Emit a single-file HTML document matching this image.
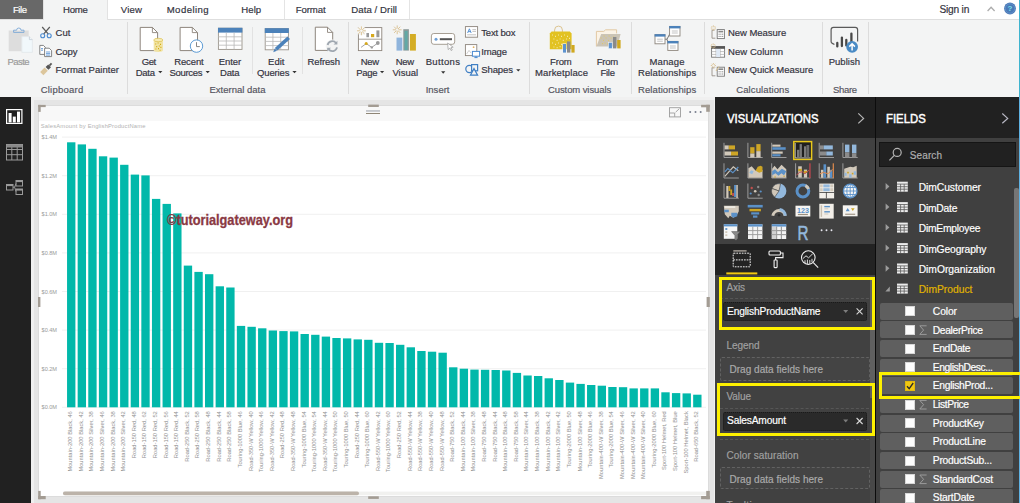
<!DOCTYPE html>
<html><head><meta charset="utf-8"><title>Power BI Desktop</title>
<style>
html,body{margin:0;padding:0}
body{width:1020px;height:503px;overflow:hidden;position:relative;background:#ffffff;font-family:"Liberation Sans",sans-serif;}
div,span,svg{position:absolute;box-sizing:border-box}
.t{white-space:nowrap;display:block;-webkit-text-stroke:0.18px currentColor}
#tabs{left:0;top:0;width:1020px;height:19px;background:#ffffff}
#filetab{left:0;top:0;width:43px;height:19px;background:#686868}
#hometab{left:43.4px;top:0;width:64.2px;height:20px;background:#f3f4f4;border-left:1px solid #e2e2e2;border-right:1px solid #e2e2e2}
#ribbon{left:0;top:19px;width:1020px;height:78px;background:#f3f4f4;border-top:1px solid #dedede}
.vsep{width:1px;background:#dcdcdc}
#sidebar{left:0;top:97.3px;width:31.6px;height:406px;background:#212121}
#canvasbg{left:31px;top:97px;width:684.2px;height:406px;background:#f0f0f0}
#canvasin{left:34px;top:100.4px;width:680px;height:402.6px;background:#e5e5e5}
#visual{left:38px;top:105px;width:671px;height:392.2px;background:#ffffff;border:1px solid #dcdcdc}
#vhead{left:39px;top:106px;width:669px;height:15px;background:#f8f8f8}
#vizpane{left:715.2px;top:97px;width:159.4px;height:406px;background:#414141}
#vizhead{left:715.2px;top:97px;width:159.4px;height:41px;background:#212121}
#viztabs{left:715.2px;top:244px;width:159.4px;height:31px;background:#232323}
#gap{left:874.5px;top:97px;width:1.9px;height:406px;background:#0c0c0c}
#fieldspane{left:876.4px;top:97px;width:143.6px;height:406px;background:#404040}
#fieldshead{left:876.4px;top:97px;width:143.6px;height:41px;background:#212121}
.chip{background:#2a2a2a;border:1px dotted #1a1a1a;border-radius:2px}
.drop{border:1px dashed #626262;border-radius:2px;background:#444444}
.hl{border:3px solid #fdf000}
.frow{left:880px;width:133px;height:16px;background:#5f5f5f;border-radius:2px}
.cb{left:905px;width:10px;height:10px;background:#fdfdfd;border:1px solid #d8d8d8}
.bl{position:static;display:inline-block;width:0;height:0}
</style></head>
<body>
<div id="tabs"></div>
<div id="ribbon"></div>
<div id="filetab"></div>
<div id="hometab"></div>
<div class="vsep" style="left:284px;top:0;height:19px;background:#e4e4e4"></div>
<div class="vsep" style="left:409px;top:0;height:19px;background:#e4e4e4"></div>
<div class="vsep" style="left:126.5px;top:22px;height:72px"></div>
<div class="vsep" style="left:348.0px;top:22px;height:72px"></div>
<div class="vsep" style="left:529.0px;top:22px;height:72px"></div>
<div class="vsep" style="left:631.2px;top:22px;height:72px"></div>
<div class="vsep" style="left:704.0px;top:22px;height:72px"></div>
<div class="vsep" style="left:821.6px;top:22px;height:72px"></div>
<div class="vsep" style="left:867.8px;top:22px;height:72px"></div>
<div class="vsep" style="left:251.5px;top:27px;height:47px;background:#e2e2e2"></div>
<div class="vsep" style="left:302.3px;top:27px;height:47px;background:#e2e2e2"></div>
<svg style="left:0;top:0" width="1020" height="97" viewBox="0 0 1020 97">
<rect x="8.7" y="30.5" width="20" height="20.7" fill="#dddddd"/>
<path d="M13.6 32.4V30.2H16.6A2.2 2.2 0 0 1 21 30.2H24V32.4Z" fill="none" stroke="#7aa7d6" stroke-width="0.9"/>
<path d="M21.8 36.6H29.4L32.4 39.6V52.4H21.8Z" fill="#f1f8fb" stroke="#e3e7ea" stroke-width="0.8"/><path d="M29.4 36.6V39.6H32.4" fill="none" stroke="#c4cdd6" stroke-width="0.8"/>
<g fill="none" stroke="#5a5a5a" stroke-width="1.2"><path d="M42.2 27L48.4 34.2M49.8 27L43.6 34.2"/></g><g fill="none" stroke="#4b8ad0" stroke-width="1.1"><circle cx="42.7" cy="35.8" r="2"/><circle cx="49.2" cy="35.8" r="2"/></g>
<g fill="#fff" stroke="#767676" stroke-width="0.9"><path d="M39.8 45.4H43.4L45.4 47.4V54.4H39.8Z"/><path d="M44.6 48.2H49.2L51.6 50.6V56.6H44.6Z"/></g><path d="M46 52H50.2M46 53.6H50.2M46 55.1H50.2M41 48.6H43M41 50.2H43" stroke="#4b8ad0" stroke-width="0.8" fill="none"/>
<path d="M40.2 72L44.6 67.6L47.8 70.8L43.4 75.2Z" fill="#dcc69c"/><path d="M45.6 67L48.2 64.4L51 67.2L48.4 69.8Z" fill="#555"/><path d="M49.4 65.6L51.6 63.4" stroke="#555" stroke-width="1.8"/>
<path d="M140.2 27.4H152.4L157.6 32.6V50.6H140.2Z" fill="#ffffff" stroke="#8d857c" stroke-width="1"/><path d="M152.4 27.4V32.6H157.6" fill="none" stroke="#8d857c" stroke-width="0.9"/>
<path d="M153.7 40V50.2A4.6 1.7 0 0 0 162.9 50.2V40Z" fill="#f1e3a3"/><ellipse cx="158.3" cy="40" rx="4.6" ry="1.7" fill="#f6ebb5" stroke="#d9b93a" stroke-width="0.6"/><path d="M155.2 44h1M157.6 43h1M160 44.4h1M156.2 46.6h1M158.8 46h1M155.4 49h1M158 48.6h1M160.4 47.4h1M159.6 50.2h1" stroke="#d2ab10" stroke-width="1.1"/>
<path d="M180.1 27.4H192.3L197.5 32.6V50.6H180.1Z" fill="#ffffff" stroke="#8d857c" stroke-width="1"/><path d="M192.3 27.4V32.6H197.5" fill="none" stroke="#8d857c" stroke-width="0.9"/>
<circle cx="196.5" cy="46.1" r="6.2" fill="#fff" stroke="#5b9bd5" stroke-width="1"/><path d="M196.5 42.2V46.6H199.8" fill="none" stroke="#777" stroke-width="0.9"/>
<rect x="218.4" y="28.2" width="23.6" height="21.2" fill="#fff" stroke="#9b948b" stroke-width="0.9"/><rect x="218.0" y="27.8" width="24.4" height="4.8" fill="#4c82ba"/><path d="M218.4 36.8H242.0" stroke="#b9b9b9" stroke-width="0.8"/><path d="M218.4 41.0H242.0" stroke="#b9b9b9" stroke-width="0.8"/><path d="M218.4 45.2H242.0" stroke="#b9b9b9" stroke-width="0.8"/><path d="M226.3 32.6V49.4" stroke="#b9b9b9" stroke-width="0.8"/><path d="M234.1 32.6V49.4" stroke="#b9b9b9" stroke-width="0.8"/>
<rect x="265.2" y="28.6" width="23.2" height="21.2" fill="#fff" stroke="#9b948b" stroke-width="0.9"/><rect x="264.8" y="28.2" width="24.0" height="4.8" fill="#4c82ba"/><path d="M265.2 37.2H288.4" stroke="#b9b9b9" stroke-width="0.8"/><path d="M265.2 41.4H288.4" stroke="#b9b9b9" stroke-width="0.8"/><path d="M265.2 45.6H288.4" stroke="#b9b9b9" stroke-width="0.8"/><path d="M272.9 33.0V49.8" stroke="#b9b9b9" stroke-width="0.8"/><path d="M280.7 33.0V49.8" stroke="#b9b9b9" stroke-width="0.8"/>
<path d="M287.4 36.4L290 39L277.4 50.6L274.8 48Z" fill="#4c82ba"/><path d="M274.6 48.4L277 50.8L273.2 52.2Z" fill="#4c82ba"/>
<path d="M315.3 27.2H327.5L332.7 32.4V50.4H315.3Z" fill="#ffffff" stroke="#8d857c" stroke-width="1"/><path d="M327.5 27.2V32.4H332.7" fill="none" stroke="#8d857c" stroke-width="0.9"/>
<circle cx="332.3" cy="46.2" r="6.6" fill="#f3f4f4"/><g fill="none" stroke="#9fa7b0" stroke-width="1.8"><path d="M327.6 45A4.8 4.8 0 0 1 336 43"/><path d="M337 47.4A4.8 4.8 0 0 1 328.6 49.4"/></g><path d="M337.4 40.8V44.6H333.6Z" fill="#9fa7b0"/><path d="M327.2 51.6V47.8H331Z" fill="#9fa7b0"/>
<rect x="358.4" y="27.6" width="23.4" height="23" fill="#fff" stroke="#8d857c" stroke-width="0.9"/><path d="M358.4 39.2H381.8" stroke="#8d857c" stroke-width="0.8"/>
<rect x="366.4" y="33" width="2.6" height="4.2" fill="#9a9a9a"/><rect x="371" y="34" width="3.2" height="3.2" fill="#d6a81c"/><rect x="376.4" y="30.4" width="3" height="6.8" fill="#9a9a9a"/>
<path d="M361 47.4L366.2 43.6L371.8 47.4L377.8 43" fill="none" stroke="#9a9a9a" stroke-width="0.9"/><circle cx="366.2" cy="43.6" r="1.5" fill="#d6a81c"/><circle cx="371.8" cy="47.4" r="1.2" fill="#9a9a9a"/><circle cx="377.8" cy="43" r="1.9" fill="#9a9a9a"/>
<circle cx="361.4" cy="30.8" r="4.6" fill="#f7f7f5"/><path d="M362.6 30.8L365.8 30.8M362.2 31.6L364.5 33.9M361.4 32.0L361.4 35.2M360.6 31.6L358.3 33.9M360.2 30.8L357.0 30.8M360.6 30.0L358.3 27.7M361.4 29.6L361.4 26.4M362.2 30.0L364.5 27.7" stroke="#d9c08e" stroke-width="0.9" fill="none"/>
<rect x="396.5" y="37.6" width="5.8" height="13" fill="#8fb4dc"/><rect x="403.3" y="29.2" width="5.6" height="21.4" fill="#8c9a9a"/><rect x="404.6" y="31" width="3" height="19" fill="#3fb7b0" opacity="0.55"/><rect x="409.9" y="34" width="6" height="16.6" fill="#d4ad25"/>
<path d="M398.4 29.8L401.6 29.8M398.0 30.6L400.3 32.9M397.2 31.0L397.2 34.2M396.4 30.6L394.1 32.9M396.0 29.8L392.8 29.8M396.4 29.0L394.1 26.7M397.2 28.6L397.2 25.4M398.0 29.0L400.3 26.7" stroke="#d9c08e" stroke-width="0.9" fill="none"/>
<rect x="431.4" y="33.5" width="23.3" height="10.8" rx="2.4" fill="#fff" stroke="#a79f94" stroke-width="1"/><circle cx="436" cy="39.2" r="1.5" fill="#6fa0d6"/><rect x="439.8" y="38.2" width="12.2" height="2" fill="#555"/>
<path d="M447.6 43L448.2 49.6L449.9 48L451.2 50.6L452.3 50L451 47.5L453.2 47.2Z" fill="#fff" stroke="#999" stroke-width="0.7"/>
<path d="M441.1 71.3H445.3L443.2 73.7Z" fill="#333"/>
<rect x="465.4" y="26.6" width="12.2" height="10.6" fill="#fff" stroke="#8d857c" stroke-width="0.9"/><path d="M467.6 33L469.4 28.8L471.2 33M468.2 31.6H470.6" fill="none" stroke="#4b8ad0" stroke-width="0.9"/><path d="M472.4 29.6H476M472.4 31.4H476M467.2 34.8H476" stroke="#aaa" stroke-width="0.7"/>
<rect x="465.4" y="44.6" width="11.4" height="11" fill="#fff" stroke="#8d857c" stroke-width="0.9"/><circle cx="473.6" cy="47.2" r="0.9" fill="#e0b060"/><path d="M466.6 54L469 50.4L471 53" fill="none" stroke="#bbb" stroke-width="0.7"/><rect x="472.4" y="51.4" width="7.2" height="4.8" fill="#fff" stroke="#4b8ad0" stroke-width="1"/><path d="M474.4 57.6H477.6M476 56.2V57.6" stroke="#4b8ad0" stroke-width="1"/>
<g fill="none" stroke="#3f7fc4" stroke-width="1.2"><circle cx="469.4" cy="69" r="3.6"/><rect x="471.6" y="64.6" width="6" height="6.2" fill="#f3f4f4"/><path d="M470.4 75.2L474 68.6L477.6 75.2Z" fill="#f3f4f4"/></g>
<path d="M158.2 70.9H162.4L160.3 73.3Z" fill="#333"/>
<path d="M205.6 70.9H209.8L207.7 73.3Z" fill="#333"/>
<path d="M292.4 70.9H296.6L294.5 73.3Z" fill="#333"/>
<path d="M380.0 70.9H384.2L382.1 73.3Z" fill="#333"/>
<path d="M516.2 69.2H520.4L518.3 71.6Z" fill="#333"/>
<path d="M554.6 32.2V30A3.9 3.9 0 0 1 562.4 30V32.2" fill="none" stroke="#dcc490" stroke-width="1"/>
<path d="M549.8 33.6L551.6 31.6H569.8L571.6 33.6V49.2H549.8Z" fill="#e2c222"/><path d="M552 35h1M555 36.4h1M558 35h1M561 36.4h1M564 35h1M567 36.4h1M553.4 39h1M556.6 40.4h1M559.6 39h1M562.8 40.4h1M566 39h1M552 43h1M555 44.4h1M558 43h1M561 44.4h1M553.4 47h1M556.6 47.6h1M559.6 46.6h1M569 38.4h1M568.6 42h1" stroke="#f3e7a6" stroke-width="1.1"/>
<rect x="562.4" y="43.4" width="4" height="9.6" fill="#f3f4f4"/><rect x="563" y="44" width="3" height="8.6" fill="#5d93cf"/><rect x="567" y="41.4" width="3.4" height="11.2" fill="#8a8a8a"/><rect x="571.4" y="45" width="3.2" height="7.6" fill="#d0a81f"/>
<path d="M596.4 46.4V31.4H603.8L605.6 29.8H616.6V33.4" fill="#fbf3e6" stroke="#e2c9a4" stroke-width="1"/><path d="M596.4 46.4L601.2 34H620.6L617.4 46.4Z" fill="#cbc4b6"/><path d="M600.6 38h1M603 40.4h1M605.6 38h1M608 40.4h1M610.6 38h1M602 43.6h1M604.6 43h1M607 44h1M603.6 36h1M608.6 36h1M613 37h1" stroke="#e2c866" stroke-width="1"/>
<rect x="608.6" y="42.6" width="3.6" height="6" fill="#5d93cf" stroke="#f3f4f4" stroke-width="0.5"/><rect x="613" y="37" width="3.4" height="11.4" fill="#8a8a8a"/><rect x="617.2" y="40" width="3.4" height="8.4" fill="#d0a81f"/>
<path d="M665 39.2H667L670.2 33M667 39.2L668.6 44.8" fill="none" stroke="#777" stroke-width="1"/>
<rect x="655.0" y="34.6" width="10.0" height="9.2" fill="#fff" stroke="#8d857c" stroke-width="0.9"/><rect x="654.6" y="34.2" width="10.8" height="2.4" fill="#4c82ba"/><path d="M657.2 39.2H662.8M657.2 41.2H662.8" stroke="#aaa" stroke-width="0.7"/>
<rect x="669.6" y="26.4" width="10.4" height="9.6" fill="#fff" stroke="#8d857c" stroke-width="0.9"/><rect x="669.2" y="26.0" width="11.2" height="2.4" fill="#4c82ba"/><path d="M671.8 31.0H677.8M671.8 33.0H677.8" stroke="#aaa" stroke-width="0.7"/>
<rect x="667.8" y="41.4" width="10.2" height="9.0" fill="#fff" stroke="#8d857c" stroke-width="0.9"/><rect x="667.4" y="41.0" width="11.0" height="2.4" fill="#4c82ba"/><path d="M670.0 46.0H675.8M670.0 48.0H675.8" stroke="#aaa" stroke-width="0.7"/>
<path d="M714.6 30.2H712V38.2H715.4" fill="none" stroke="#8d857c" stroke-width="0.8"/><rect x="717.2" y="29.6" width="7.2" height="9" fill="#fff" stroke="#777" stroke-width="0.9"/><rect x="718.4" y="30.8" width="4.8" height="1.6" fill="#888"/><path d="M718.6 34.2h1M720.4 34.2h1M722.2 34.2h1M718.6 36.4h1M720.4 36.4h1M722.2 36.4h1" stroke="#777" stroke-width="1"/><path d="M714.6 28.0L716.0 28.0M714.2 28.8L715.2 29.8M713.4 29.2L713.4 30.6M712.6 28.8L711.6 29.8M712.2 28.0L710.8 28.0M712.6 27.2L711.6 26.2M713.4 26.8L713.4 25.4M714.2 27.2L715.2 26.2" stroke="#d9c08e" stroke-width="0.9" fill="none"/>
<rect x="711.6" y="46.6" width="13" height="10.6" fill="#fff" stroke="#777" stroke-width="0.9"/><rect x="711.2" y="46.2" width="13.8" height="2.6" fill="#555"/><path d="M711.6 51.6H724.6M711.6 54.4H724.6M716 48.8V57.2M720.2 48.8V57.2" stroke="#aaa" stroke-width="0.7"/><rect x="716.2" y="49" width="3.8" height="8" fill="#dfe9f5"/><path d="M714.4 46.0L715.8 46.0M714.0 46.8L715.0 47.8M713.2 47.2L713.2 48.6M712.4 46.8L711.4 47.8M712.0 46.0L710.6 46.0M712.4 45.2L711.4 44.2M713.2 44.8L713.2 43.4M714.0 45.2L715.0 44.2" stroke="#d9c08e" stroke-width="0.9" fill="none"/>
<path d="M714.6 67.8H712V75.8H715.4" fill="none" stroke="#8d857c" stroke-width="0.8"/><rect x="717.2" y="67.2" width="7.2" height="9" fill="#fff" stroke="#777" stroke-width="0.9"/><rect x="718.4" y="68.4" width="4.8" height="1.6" fill="#888"/><path d="M718.6 71.8h1M720.4 71.8h1M722.2 71.8h1M718.6 74.0h1M720.4 74.0h1M722.2 74.0h1" stroke="#777" stroke-width="1"/><path d="M714.6 65.6L716.0 65.6M714.2 66.4L715.2 67.4M713.4 66.8L713.4 68.2M712.6 66.4L711.6 67.4M712.2 65.6L710.8 65.6M712.6 64.8L711.6 63.8M713.4 64.4L713.4 63.0M714.2 64.8L715.2 63.8" stroke="#d9c08e" stroke-width="0.9" fill="none"/><path d="M716 71L719 66.4" stroke="#d9c08e" stroke-width="1"/>
<path d="M834.4 44.6L832.4 43.4A2.2 2.2 0 0 1 831.1 41.4V29.8A2.4 2.4 0 0 1 833.5 27.4H855.2A2.4 2.4 0 0 1 857.6 29.8V41.6" fill="none" stroke="#5a5a5a" stroke-width="1.2"/>
<g stroke="#484848" stroke-width="2.3" stroke-linecap="round"><path d="M837.3 43V46.4M841.9 37.6V46M846.3 40V45.4M851.4 33.6V42"/></g>
<circle cx="852.1" cy="46.8" r="5.9" fill="#4a8bc5"/><path d="M852.1 50.6V44.2M849.3 46.6L852.1 43.8L854.9 46.6" fill="none" stroke="#fff" stroke-width="1.5"/>
<path d="M987.6 11L991.1 7.2L994.6 11" fill="none" stroke="#adadad" stroke-width="1.3"/>
<circle cx="1010" cy="8.5" r="5.9" fill="#4a7ab8"/><circle cx="1010" cy="8.5" r="4.7" fill="none" stroke="#6f9ad0" stroke-width="0.6"/><text x="1010" y="11.4" font-family="Liberation Sans, sans-serif" font-size="8" font-weight="bold" fill="#7fe0e8" text-anchor="middle">?</text>
</svg>
<div style="left:1018.8px;top:0;width:1.2px;height:97px;background:#3fb4cf"></div>
<div id="sidebar"></div>
<div id="canvasbg"></div>
<div id="canvasin"></div>
<div id="visual"></div>
<div id="vhead"></div>
<svg id="chart" style="left:0;top:97px" width="716" height="406" viewBox="0 97 716 406">
<g fill="none" stroke="#ffffff" stroke-width="1.2"><rect x="6.6" y="109.6" width="15.3" height="13.8"/></g>
<g fill="#ffffff"><rect x="8.6" y="113" width="3" height="9.4"/><rect x="12.8" y="116.6" width="3" height="5.8"/><rect x="17" y="111.6" width="3" height="10.8"/></g>
<g fill="none" stroke="#9a9a9a" stroke-width="1"><rect x="6.5" y="144.5" width="16" height="15.5"/><path d="M6.5 149.5h16M6.5 154.7h16M11.8 147v13M17.2 147v13"/></g><rect x="6.5" y="144.5" width="16" height="3" fill="#8a8a8a"/>
<g fill="none" stroke="#9a9a9a" stroke-width="1"><rect x="6.5" y="184.5" width="6.5" height="5.5"/><rect x="16" y="180.5" width="6.5" height="5.5"/><rect x="16" y="189" width="6.5" height="5.5"/><path d="M13 187.2h1.6M14.6 187.2L16 183.5M14.6 187.2L16 191.6"/></g>
<rect x="6.5" y="184.5" width="6.5" height="1.6" fill="#9a9a9a"/><rect x="16" y="180.5" width="6.5" height="1.6" fill="#9a9a9a"/><rect x="16" y="189" width="6.5" height="1.6" fill="#9a9a9a"/>
<rect x="62" y="406.80" width="644" height="1" fill="#f0f0f0"/>
<rect x="62" y="368.20" width="644" height="1" fill="#f0f0f0"/>
<rect x="62" y="329.60" width="644" height="1" fill="#f0f0f0"/>
<rect x="62" y="291.00" width="644" height="1" fill="#f0f0f0"/>
<rect x="62" y="252.40" width="644" height="1" fill="#f0f0f0"/>
<rect x="62" y="213.80" width="644" height="1" fill="#f0f0f0"/>
<rect x="62" y="175.20" width="644" height="1" fill="#f0f0f0"/>
<rect x="62" y="136.60" width="644" height="1" fill="#f0f0f0"/>
<g fill="#01b8aa">
<rect x="67.05" y="142.30" width="8.35" height="265.00"/>
<rect x="77.66" y="144.40" width="8.35" height="262.90"/>
<rect x="88.27" y="148.80" width="8.35" height="258.50"/>
<rect x="98.89" y="156.30" width="8.35" height="251.00"/>
<rect x="109.50" y="157.60" width="8.35" height="249.70"/>
<rect x="120.11" y="164.80" width="8.35" height="242.50"/>
<rect x="130.72" y="174.60" width="8.35" height="232.70"/>
<rect x="141.33" y="175.40" width="8.35" height="231.90"/>
<rect x="151.95" y="198.90" width="8.35" height="208.40"/>
<rect x="162.56" y="203.90" width="8.35" height="203.40"/>
<rect x="173.17" y="213.40" width="8.35" height="193.90"/>
<rect x="183.78" y="265.60" width="8.35" height="141.70"/>
<rect x="194.39" y="271.90" width="8.35" height="135.40"/>
<rect x="205.01" y="274.20" width="8.35" height="133.10"/>
<rect x="215.62" y="286.30" width="8.35" height="121.00"/>
<rect x="226.23" y="287.50" width="8.35" height="119.80"/>
<rect x="236.84" y="325.90" width="8.35" height="81.40"/>
<rect x="247.45" y="326.80" width="8.35" height="80.50"/>
<rect x="258.07" y="328.30" width="8.35" height="79.00"/>
<rect x="268.68" y="330.50" width="8.35" height="76.80"/>
<rect x="279.29" y="331.10" width="8.35" height="76.20"/>
<rect x="289.90" y="331.40" width="8.35" height="75.90"/>
<rect x="300.51" y="334.00" width="8.35" height="73.30"/>
<rect x="311.13" y="334.80" width="8.35" height="72.50"/>
<rect x="321.74" y="336.60" width="8.35" height="70.70"/>
<rect x="332.35" y="338.00" width="8.35" height="69.30"/>
<rect x="342.96" y="338.40" width="8.35" height="68.90"/>
<rect x="353.57" y="339.40" width="8.35" height="67.90"/>
<rect x="364.19" y="339.80" width="8.35" height="67.50"/>
<rect x="374.80" y="342.80" width="8.35" height="64.50"/>
<rect x="385.41" y="343.00" width="8.35" height="64.30"/>
<rect x="396.02" y="344.80" width="8.35" height="62.50"/>
<rect x="406.63" y="347.30" width="8.35" height="60.00"/>
<rect x="417.25" y="351.00" width="8.35" height="56.30"/>
<rect x="427.86" y="351.70" width="8.35" height="55.60"/>
<rect x="438.47" y="352.70" width="8.35" height="54.60"/>
<rect x="449.08" y="367.30" width="8.35" height="40.00"/>
<rect x="459.69" y="368.70" width="8.35" height="38.60"/>
<rect x="470.31" y="369.60" width="8.35" height="37.70"/>
<rect x="480.92" y="369.80" width="8.35" height="37.50"/>
<rect x="491.53" y="370.00" width="8.35" height="37.30"/>
<rect x="502.14" y="370.50" width="8.35" height="36.80"/>
<rect x="512.75" y="372.90" width="8.35" height="34.40"/>
<rect x="523.37" y="375.50" width="8.35" height="31.80"/>
<rect x="533.98" y="376.00" width="8.35" height="31.30"/>
<rect x="544.59" y="378.30" width="8.35" height="29.00"/>
<rect x="555.20" y="380.00" width="8.35" height="27.30"/>
<rect x="565.81" y="382.60" width="8.35" height="24.70"/>
<rect x="576.43" y="383.90" width="8.35" height="23.40"/>
<rect x="587.04" y="385.00" width="8.35" height="22.30"/>
<rect x="597.65" y="385.70" width="8.35" height="21.60"/>
<rect x="608.26" y="387.00" width="8.35" height="20.30"/>
<rect x="618.87" y="387.20" width="8.35" height="20.10"/>
<rect x="629.49" y="388.40" width="8.35" height="18.90"/>
<rect x="640.10" y="388.40" width="8.35" height="18.90"/>
<rect x="650.71" y="388.40" width="8.35" height="18.90"/>
<rect x="661.32" y="392.30" width="8.35" height="15.00"/>
<rect x="671.93" y="393.10" width="8.35" height="14.20"/>
<rect x="682.55" y="393.40" width="8.35" height="13.90"/>
<rect x="693.16" y="394.70" width="8.35" height="12.60"/>
</g>
<g font-family="Liberation Sans, sans-serif" font-size="5.75" fill="#8f8f8f" text-anchor="end">
<text transform="translate(72.12,411.2) rotate(-90)">Mountain-200 Black, 46</text>
<text transform="translate(82.74,411.2) rotate(-90)">Mountain-200 Black, 42</text>
<text transform="translate(93.35,411.2) rotate(-90)">Mountain-200 Silver, 38</text>
<text transform="translate(103.96,411.2) rotate(-90)">Mountain-200 Silver, 46</text>
<text transform="translate(114.57,411.2) rotate(-90)">Mountain-200 Black, 38</text>
<text transform="translate(125.19,411.2) rotate(-90)">Mountain-200 Silver, 42</text>
<text transform="translate(135.80,411.2) rotate(-90)">Road-150 Red, 48</text>
<text transform="translate(146.41,411.2) rotate(-90)">Road-150 Red, 62</text>
<text transform="translate(157.02,411.2) rotate(-90)">Road-150 Red, 52</text>
<text transform="translate(167.63,411.2) rotate(-90)">Road-150 Red, 56</text>
<text transform="translate(178.25,411.2) rotate(-90)">Road-150 Red, 44</text>
<text transform="translate(188.86,411.2) rotate(-90)">Road-250 Black, 52</text>
<text transform="translate(199.47,411.2) rotate(-90)">Road-250 Red, 58</text>
<text transform="translate(210.08,411.2) rotate(-90)">Road-250 Black, 48</text>
<text transform="translate(220.69,411.2) rotate(-90)">Road-250 Black, 44</text>
<text transform="translate(231.31,411.2) rotate(-90)">Road-250 Black, 58</text>
<text transform="translate(241.92,411.2) rotate(-90)">Touring-1000 Blue, 46</text>
<text transform="translate(252.53,411.2) rotate(-90)">Road-350-W Yellow, 40</text>
<text transform="translate(263.14,411.2) rotate(-90)">Touring-1000 Yellow, 46</text>
<text transform="translate(273.75,411.2) rotate(-90)">Road-350-W Yellow, 42</text>
<text transform="translate(284.37,411.2) rotate(-90)">Road-250 Red, 48</text>
<text transform="translate(294.98,411.2) rotate(-90)">Road-350-W Yellow, 48</text>
<text transform="translate(305.59,411.2) rotate(-90)">Touring-1000 Blue, 54</text>
<text transform="translate(316.20,411.2) rotate(-90)">Touring-1000 Yellow, 54</text>
<text transform="translate(326.81,411.2) rotate(-90)">Road-350-W Yellow, 44</text>
<text transform="translate(337.43,411.2) rotate(-90)">Touring-1000 Yellow, 50</text>
<text transform="translate(348.04,411.2) rotate(-90)">Touring-1000 Blue, 50</text>
<text transform="translate(358.65,411.2) rotate(-90)">Road-250 Red, 44</text>
<text transform="translate(369.26,411.2) rotate(-90)">Touring-1000 Blue, 60</text>
<text transform="translate(379.87,411.2) rotate(-90)">Road-550-W Yellow, 42</text>
<text transform="translate(390.49,411.2) rotate(-90)">Touring-1000 Yellow, 60</text>
<text transform="translate(401.10,411.2) rotate(-90)">Road-250 Red, 52</text>
<text transform="translate(411.71,411.2) rotate(-90)">Road-550-W Yellow, 44</text>
<text transform="translate(422.32,411.2) rotate(-90)">Road-550-W Yellow, 38</text>
<text transform="translate(432.93,411.2) rotate(-90)">Road-550-W Yellow, 40</text>
<text transform="translate(443.55,411.2) rotate(-90)">Road-550-W Yellow, 48</text>
<text transform="translate(454.16,411.2) rotate(-90)">Road-750 Black, 52</text>
<text transform="translate(464.77,411.2) rotate(-90)">Mountain-100 Black, 44</text>
<text transform="translate(475.38,411.2) rotate(-90)">Mountain-100 Silver, 38</text>
<text transform="translate(485.99,411.2) rotate(-90)">Road-750 Black, 48</text>
<text transform="translate(496.61,411.2) rotate(-90)">Road-750 Black, 44</text>
<text transform="translate(507.22,411.2) rotate(-90)">Mountain-100 Black, 48</text>
<text transform="translate(517.83,411.2) rotate(-90)">Road-750 Black, 58</text>
<text transform="translate(528.44,411.2) rotate(-90)">Mountain-100 Silver, 44</text>
<text transform="translate(539.05,411.2) rotate(-90)">Mountain-100 Black, 38</text>
<text transform="translate(549.66,411.2) rotate(-90)">Mountain-100 Black, 42</text>
<text transform="translate(560.28,411.2) rotate(-90)">Mountain-100 Silver, 42</text>
<text transform="translate(570.89,411.2) rotate(-90)">Touring-2000 Blue, 50</text>
<text transform="translate(581.50,411.2) rotate(-90)">Mountain-100 Silver, 48</text>
<text transform="translate(592.11,411.2) rotate(-90)">Touring-2000 Blue, 46</text>
<text transform="translate(602.72,411.2) rotate(-90)">Mountain-400-W Silver, 38</text>
<text transform="translate(613.34,411.2) rotate(-90)">Touring-2000 Blue, 54</text>
<text transform="translate(623.95,411.2) rotate(-90)">Mountain-400-W Silver, 46</text>
<text transform="translate(634.56,411.2) rotate(-90)">Mountain-400-W Silver, 42</text>
<text transform="translate(645.17,411.2) rotate(-90)">Mountain-400-W Silver, 40</text>
<text transform="translate(655.78,411.2) rotate(-90)">Touring-2000 Blue, 60</text>
<text transform="translate(666.40,411.2) rotate(-90)">Sport-100 Helmet, Red</text>
<text transform="translate(677.01,411.2) rotate(-90)">Sport-100 Helmet, Blue</text>
<text transform="translate(687.62,411.2) rotate(-90)">Sport-100 Helmet, Black</text>
<text transform="translate(698.23,411.2) rotate(-90)">Road-650 Black, 52</text>
</g>
<rect x="63" y="491.6" width="643" height="3.6" fill="#f1f1ef"/>
<rect x="63" y="491.6" width="296" height="3.6" rx="1.8" fill="#bcb3a9"/>
<rect x="366" y="110.2" width="14" height="1.5" fill="#b9bcc2"/><rect x="366" y="113" width="14" height="1" fill="#8f8676"/>
<g fill="none" stroke="#9c9c9c" stroke-width="0.9"><rect x="669.5" y="107.7" width="11" height="9.2"/><path d="M669.5 113h5.2v3.8"/><path d="M675.6 112.2l3.8-3.6"/></g>
<g fill="#7a7f8e"><circle cx="690.2" cy="112" r="1"/><circle cx="695.5" cy="112" r="1"/><circle cx="700.7" cy="112" r="1"/></g>
<g fill="#a39c93">
<rect x="38.2" y="104.9" width="7.5" height="2.2"/><rect x="38.2" y="104.9" width="2.5" height="7"/>
<rect x="701.1" y="104.8" width="8.7" height="2.5"/><rect x="706.2" y="104.8" width="3.6" height="7"/>
<rect x="38.2" y="496" width="7.5" height="3.2"/><rect x="38.2" y="490.9" width="2.5" height="8.3"/>
<rect x="701.1" y="496" width="8.7" height="3.2"/><rect x="706.2" y="490.9" width="3.6" height="8.3"/>
<rect x="368.2" y="104.6" width="10.6" height="2.4"/><rect x="368.2" y="496.3" width="10.6" height="2.6"/>
<rect x="38" y="297" width="2.4" height="10"/><rect x="706.6" y="297" width="3.2" height="10"/>
</g>
</svg>
<div id="vizpane"></div>
<div id="vizhead"></div>
<div id="viztabs"></div>
<div id="gap"></div>
<div style="left:869.6px;top:276px;width:5.2px;height:227px;background:#484848"></div>
<div style="left:869.6px;top:277px;width:5.2px;height:121px;background:#606060"></div>
<div class="chip" style="left:722.5px;top:301.8px;width:144px;height:19px"></div>
<div class="drop" style="left:720px;top:357.3px;width:149.5px;height:23.6px"></div>
<div class="chip" style="left:722.5px;top:411.5px;width:144px;height:19px"></div>
<div class="drop" style="left:720px;top:466.6px;width:149.5px;height:22.6px"></div>
<div style="left:720px;top:298px;width:149px;height:0;border-top:1px dashed #565656"></div>
<div style="left:720px;top:407.5px;width:149px;height:0;border-top:1px dashed #565656"></div>
<div style="left:720px;top:438.5px;width:149px;height:0;border-top:1px dashed #565656"></div>
<div class="hl" style="left:718.9px;top:276.9px;width:156.1px;height:52.8px"></div>
<div class="hl" style="left:717px;top:383px;width:158.1px;height:52.7px"></div>
<svg style="left:716px;top:97px" width="160" height="406" viewBox="716 97 160 406">
<path d="M858.3 113.4L863.6 118.4L858.3 123.4" fill="none" stroke="#b8b8b8" stroke-width="1.2"/>
<g transform="translate(723.3,142.3)"><path d="M0.7 0.5V15.2H15.5" fill="none" stroke="#9b9b9b" stroke-width="1"/><rect x="1.3" y="3.1" width="4.2" height="4.0" fill="#d2c9bb"/><rect x="5.5" y="3.1" width="6.2" height="4.0" fill="#cda526"/><rect x="1.3" y="9.2" width="6.4" height="4.0" fill="#d2c9bb"/><rect x="7.7" y="9.2" width="7.0" height="4.0" fill="#cda526"/></g>
<g transform="translate(747.2,142.3)"><path d="M0.7 0.5V15.2H15.5" fill="none" stroke="#9b9b9b" stroke-width="1"/><rect x="3.0" y="11.0" width="4.3" height="4.2" fill="#d2c9bb"/><rect x="3.0" y="4.9" width="4.3" height="6.1" fill="#cda526"/><rect x="9.1" y="8.8" width="4.3" height="6.4" fill="#d2c9bb"/><rect x="9.1" y="1.8" width="4.3" height="7.0" fill="#cda526"/></g>
<g transform="translate(771.0,142.3)"><path d="M0.7 0.5V15.2H15.5" fill="none" stroke="#9b9b9b" stroke-width="1"/><rect x="1.3" y="2.3" width="8.2" height="2.1" fill="#d2c9bb"/><rect x="1.3" y="4.9" width="13.4" height="2.6" fill="#5b91c8"/><rect x="1.3" y="9.2" width="10.4" height="2.2" fill="#d2c9bb"/><rect x="1.3" y="11.9" width="8.2" height="2.2" fill="#5b91c8"/></g>
<rect x="793.8" y="141.6" width="17.8" height="17.8" fill="#1f1f1f" stroke="#e9c81b" stroke-width="1.5"/><path d="M795.2 143V157.9H810.5" fill="none" stroke="#ddd" stroke-width="0.8"/><rect x="797.0" y="149.8" width="2.4" height="7.6" fill="#7a7a7a"/><rect x="799.6" y="144.1" width="2.3" height="13.3" fill="#7a7a7a"/><rect x="804.0" y="146.3" width="2.3" height="11.1" fill="#7a7a7a"/><rect x="806.5" y="145.0" width="2.8" height="12.4" fill="#6a6a6a"/>
<g transform="translate(818.5,142.3)"><path d="M0.7 0.5V15.2H15.5" fill="none" stroke="#9b9b9b" stroke-width="1"/><rect x="1.3" y="3.1" width="3.9" height="4.0" fill="#8b8b8b"/><rect x="5.2" y="3.1" width="9.1" height="4.0" fill="#93b8dc"/><rect x="1.3" y="9.2" width="6.5" height="4.0" fill="#8b8b8b"/><rect x="7.8" y="9.2" width="6.5" height="4.0" fill="#93b8dc"/></g>
<g transform="translate(842.2,142.3)"><path d="M0.7 0.5V15.2H15.5" fill="none" stroke="#9b9b9b" stroke-width="1"/><rect x="2.8" y="2.3" width="4.4" height="7.8" fill="#93b8dc"/><rect x="2.8" y="10.1" width="4.4" height="5.1" fill="#8b8b8b"/><rect x="9.8" y="2.3" width="4.4" height="8.7" fill="#93b8dc"/><rect x="9.8" y="11.0" width="4.4" height="4.2" fill="#8b8b8b"/></g>
<g transform="translate(723.3,162.8)"><path d="M0.7 0.5V15.2H15.5" fill="none" stroke="#9b9b9b" stroke-width="1"/><path d="M1.5 13.5L10 4L15 8" fill="none" stroke="#d2c9bb" stroke-width="1.1"/><path d="M1.5 9L4.5 5.8L9.5 10L15 4.2" fill="none" stroke="#5b91c8" stroke-width="1.2"/></g>
<g transform="translate(747.2,162.8)"><path d="M0.7 0.5V15.2H15.5" fill="none" stroke="#9b9b9b" stroke-width="1"/><path d="M1.2 15V5.5L4.5 3.5L8.5 8L11.5 4.5L15.3 7.5V15Z" fill="#d2c9bb"/><path d="M8.5 8L10.5 4L13.5 3L15.3 4V8.6L12 10Z" fill="#cda526"/><path d="M2 10L4 7.5L6.5 8.5L5 11.5Z" fill="#93b8dc"/></g>
<g transform="translate(771.0,162.8)"><path d="M0.7 0.5V15.2H15.5" fill="none" stroke="#9b9b9b" stroke-width="1"/><path d="M1.2 15V6L3.5 3L6.5 6.5L10.5 2L15.3 6.5V15Z" fill="#d2c9bb"/><path d="M1.2 12.5V8.5L4 6.5L7 9.5L10.8 6L15.3 8.5L13 12.5L10.5 10.5L7.5 13L4.5 10.5Z" fill="#5b91c8"/><rect x="3.5" y="13.6" width="1.2" height="1.2" fill="#cda526"/><rect x="12.5" y="12.8" width="1.2" height="1.2" fill="#cda526"/></g>
<g transform="translate(794.9,162.8)"><path d="M0.7 0.5V15.2H15.5" fill="none" stroke="#9b9b9b" stroke-width="1"/><rect x="3.3" y="3.5" width="3.6" height="11.3" fill="#d2c9bb"/><rect x="3.3" y="6.0" width="3.6" height="2.5" fill="#cda526"/><rect x="9.0" y="6.8" width="3.2" height="8.0" fill="#d2c9bb"/><rect x="9.0" y="8.0" width="3.2" height="2.2" fill="#cda526"/><rect x="14.3" y="0.5" width="1.5" height="14.7" fill="#b0474d"/><path d="M1.5 12.5L4.5 9.5L7.5 9L10 11L14 7.5" fill="none" stroke="#c0504d" stroke-width="1"/></g>
<g transform="translate(818.5,162.8)"><path d="M0.7 0.5V15.2H15.5" fill="none" stroke="#9b9b9b" stroke-width="1"/><rect x="2.4" y="7.0" width="2.6" height="8.0" fill="#d2c9bb"/><rect x="5.0" y="1.5" width="2.6" height="13.5" fill="#5b91c8"/><rect x="8.8" y="4.0" width="2.6" height="11.0" fill="#d2c9bb"/><rect x="11.4" y="7.0" width="2.4" height="8.0" fill="#5b91c8"/><rect x="14.2" y="0.5" width="1.2" height="14.7" fill="#e08b4d"/><path d="M1.5 11L5 9.5L9.5 11L14 6.5" fill="none" stroke="#e08b4d" stroke-width="1"/></g>
<g transform="translate(842.2,162.8)"><path d="M0.7 0.5V15.2H15.5" fill="none" stroke="#9b9b9b" stroke-width="1"/><path d="M2 15V6L5 5L8 4L11 4.5L14.5 3V15Z" fill="#d2c9bb"/><rect x="2.4" y="10.0" width="2.0" height="3.0" fill="#93b8dc"/><rect x="7.0" y="11.5" width="2.4" height="3.5" fill="#93b8dc"/><rect x="11.5" y="8.5" width="2.4" height="3.5" fill="#93b8dc"/><rect x="5.0" y="9.0" width="1.6" height="1.6" fill="#cda526"/><rect x="9.6" y="10.0" width="1.6" height="1.6" fill="#cda526"/></g>
<g transform="translate(723.3,183.0)"><path d="M0.7 0.5V15.2H15.5" fill="none" stroke="#9b9b9b" stroke-width="1"/><rect x="3.0" y="3.0" width="2.2" height="12.0" fill="#d2c9bb"/><rect x="5.2" y="3.0" width="1.8" height="5.0" fill="#cda526"/><rect x="7.0" y="6.5" width="1.8" height="5.5" fill="#cda526"/><rect x="8.8" y="10.0" width="2.0" height="3.0" fill="#c0504d"/><rect x="10.8" y="2.0" width="2.2" height="12.0" fill="#5b91c8"/><rect x="13.0" y="2.0" width="1.5" height="13.0" fill="#d2c9bb"/></g>
<g transform="translate(747.2,183.0)"><path d="M0.7 0.5V15.2H15.5" fill="none" stroke="#9b9b9b" stroke-width="1"/><circle cx="4.5" cy="5" r="1.2" fill="#c0504d"/><circle cx="11" cy="4" r="1.2" fill="#8b8b8b"/><circle cx="8" cy="8.2" r="1.3" fill="#d2c9bb"/><circle cx="3.5" cy="10.5" r="1.1" fill="#5b91c8"/><circle cx="13.5" cy="8.5" r="1.1" fill="#5b91c8"/><circle cx="11.5" cy="12" r="1.2" fill="#8b8b8b"/></g>
<g transform="translate(771.0,183.0)"><circle cx="8" cy="8" r="7.4" fill="#93b8dc"/><path d="M8 8L9.5 0.8A7.4 7.4 0 0 0 1 5.5Z" fill="#d2c9bb" stroke="#3c3c3c" stroke-width="0.6"/><path d="M8 8L1 5.5A7.4 7.4 0 0 0 3.8 14Z" fill="#cfc6b8" stroke="#3c3c3c" stroke-width="0.6"/></g>
<g transform="translate(794.9,183.0)"><circle cx="8" cy="8" r="5.9" fill="none" stroke="#5b91c8" stroke-width="3"/><path d="M10.5 2.6A5.9 5.9 0 0 1 13.6 6" fill="none" stroke="#d2c9bb" stroke-width="3"/></g>
<g transform="translate(818.5,183.0)"><rect x="0.8" y="0.6" width="14.8" height="14.8" fill="#f2efea"/><rect x="1.6" y="1.4" width="2.6" height="3.0" fill="#d2c9bb"/><rect x="4.8" y="1.4" width="6.4" height="3.0" fill="#93b8dc"/><rect x="11.8" y="1.4" width="3.0" height="3.0" fill="#d2c9bb"/><rect x="1.6" y="5.2" width="2.6" height="3.0" fill="#d2c9bb"/><rect x="4.8" y="5.2" width="6.4" height="3.0" fill="#93b8dc"/><rect x="11.8" y="5.2" width="3.0" height="3.0" fill="#d2c9bb"/><rect x="0.8" y="9.0" width="14.8" height="0.8" fill="#3c3c3c"/><rect x="7.4" y="9.0" width="0.8" height="6.4" fill="#3c3c3c"/></g>
<g transform="translate(842.2,183.0)"><circle cx="8" cy="8" r="6.8" fill="#f4f4f4" stroke="#5b91c8" stroke-width="1.3"/><path d="M1.5 8H14.5M2.5 4.5H13.5M2.5 11.5H13.5M8 1.2V14.8" fill="none" stroke="#5b91c8" stroke-width="0.9"/><ellipse cx="8" cy="8" rx="3.4" ry="6.8" fill="none" stroke="#5b91c8" stroke-width="0.9"/></g>
<g transform="translate(723.3,203.3)"><path d="M0.5 2.5H15.5V8L13.5 12L10 14.5L6.5 12.5L5 15L1.5 11Z" fill="#d2c9bb"/><path d="M1 6.5H5.5V9H1ZM8 9.5H14V13L10 14.5L8 13Z" fill="#5b91c8"/><path d="M1.5 3H12V4.5H1.5Z" fill="#f5f2ec"/></g>
<g transform="translate(747.2,203.3)"><rect x="0.5" y="1.6" width="15.0" height="2.6" fill="#5b91c8"/><rect x="2.3" y="5.6" width="11.4" height="2.4" fill="#cda526"/><rect x="4.0" y="9.0" width="8.0" height="2.2" fill="#5b91c8"/><rect x="5.8" y="12.2" width="4.4" height="2.2" fill="#5b91c8"/></g>
<g transform="translate(771.0,203.3)"><path d="M1.8 12.5A6.3 6.3 0 0 1 14.2 12.5" fill="none" stroke="#d2c9bb" stroke-width="3"/><path d="M8.6 6.2A6.3 6.3 0 0 1 14.2 12.5" fill="none" stroke="#93b8dc" stroke-width="3"/><circle cx="8" cy="12" r="1.2" fill="#2a2a2a"/></g>
<g transform="translate(794.9,203.3)"><rect x="0.6" y="2.4" width="14.8" height="10.8" fill="#f6f4f0"/><text x="8" y="9.3" font-family="Liberation Sans, sans-serif" font-size="7.2" font-weight="bold" fill="#5b91c8" text-anchor="middle">123</text><rect x="3.0" y="10.6" width="10.0" height="1.2" fill="#9a8f80"/></g>
<g transform="translate(818.5,203.3)"><rect x="0.8" y="0.5" width="14.4" height="14.8" fill="#f3efe9"/><rect x="2.2" y="2.0" width="1.4" height="11.6" fill="#c9bfb0"/><rect x="5.8" y="2.6" width="5.6" height="1.4" fill="#5b91c8"/><rect x="5.8" y="5.0" width="4.0" height="1.0" fill="#d0c8bc"/><rect x="5.8" y="7.8" width="5.6" height="1.4" fill="#5b91c8"/><rect x="5.8" y="10.2" width="4.0" height="1.0" fill="#d0c8bc"/></g>
<g transform="translate(842.2,203.3)"><rect x="0.6" y="2.0" width="14.8" height="11.0" fill="#f6f4f0"/><path d="M3.5 8L5.5 4.8L7.5 8Z" fill="#5b91c8"/><path d="M8.8 5L12.4 5L10.6 7.8Z" fill="#cda526"/><rect x="3.0" y="10.4" width="10.0" height="1.1" fill="#9a8f80"/></g>
<g transform="translate(723.3,223.6)"><rect x="0.5" y="0.6" width="13.5" height="14.6" fill="#f6f6f6"/><rect x="0.5" y="0.6" width="13.5" height="2.2" fill="#5b91c8"/><rect x="2.0" y="4.5" width="2.0" height="1.8" fill="#5b91c8"/><rect x="2.0" y="7.6" width="2.0" height="1.8" fill="#d2c9bb"/><rect x="2.0" y="10.7" width="2.0" height="1.8" fill="#d2c9bb"/><path d="M8.3 8H16.8L13.6 11.8V16.4H11.6V11.8Z" fill="#8a8a8a" stroke="#555" stroke-width="0.5"/></g>
<g transform="translate(747.2,223.6)"><rect x="0.8" y="0.6" width="14.4" height="14.8" fill="#f4f4f4"/><rect x="0.8" y="0.6" width="14.4" height="2.4" fill="#5b91c8"/><path d="M0.8 7H15.2M0.8 11H15.2M5.6 3V15.4M10.4 3V15.4" fill="none" stroke="#9a9a9a" stroke-width="0.9"/></g>
<g transform="translate(771.0,223.6)"><rect x="0.8" y="0.6" width="14.4" height="14.8" fill="#f4f4f4"/><rect x="0.8" y="0.6" width="14.4" height="2.4" fill="#5b91c8"/><path d="M0.8 7H15.2M0.8 11H15.2M5.6 3V15.4M10.4 3V15.4" fill="none" stroke="#9a9a9a" stroke-width="0.9"/><rect x="0.8" y="3.0" width="4.8" height="12.4" fill="#d2d2d2"/><path d="M0.8 7H15.2M0.8 11H15.2M5.6 3V15.4M10.4 3V15.4" fill="none" stroke="#9a9a9a" stroke-width="0.9"/></g>
<text x="802.9" y="239.6" font-family="Liberation Sans, sans-serif" font-size="20" fill="#93b8dc" stroke="#93b8dc" stroke-width="0.55" text-anchor="middle" textLength="11" lengthAdjust="spacingAndGlyphs">R</text>
<g fill="#e8e8f0"><circle cx="821.6" cy="230.2" r="0.95"/><circle cx="826.5" cy="230.2" r="0.95"/><circle cx="831.5" cy="230.2" r="0.95"/></g>
<rect x="726.3" y="272.4" width="31" height="2" fill="#f2c811"/>
<path d="M733.3 250.9H746.6" stroke="#b5aea6" stroke-width="1.3" fill="none"/><g fill="none" stroke="#f0f0f0" stroke-width="1"><rect x="733.2" y="253.2" width="17" height="13.6" rx="0.5" stroke-dasharray="1.7 1"/><path d="M733.2 259.9H750.2" stroke-dasharray="1.7 1"/></g>
<g fill="none" stroke="#f0f0f0" stroke-width="1.1"><rect x="769" y="251" width="11.4" height="4" rx="1"/><path d="M780.4 253H783V257.6H775.6V260"/><rect x="774.1" y="260" width="3" height="7.6" rx="0.6"/></g>
<g fill="none" stroke="#f0f0f0" stroke-width="1.1"><circle cx="808.3" cy="257.6" r="6.8"/><path d="M813.3 262.6L818.2 267.6"/><path d="M803 258.5L806 255.8L808.6 257.8L812.8 253.6" stroke-width="0.9"/><path d="M805 263V260.2M807.4 263.8V259.6M809.8 263.6V260M812 262V258.8" stroke-width="0.9"/></g>
<path d="M843.2 310.0L848.2 310.0L845.7 313.0Z" fill="#7d7d7d"/>
<path d="M856.6 308.4L862.6 314.4M862.6 308.4L856.6 314.4" stroke="#d8d8d8" stroke-width="1.1" fill="none"/>
<path d="M843.2 419.6L848.2 419.6L845.7 422.6Z" fill="#7d7d7d"/>
<path d="M856.6 418.0L862.6 424.0M862.6 418.0L856.6 424.0" stroke="#d8d8d8" stroke-width="1.1" fill="none"/>
</svg>
<div id="fieldspane"></div>
<div id="fieldshead"></div>
<div style="left:879.3px;top:142.2px;width:136.6px;height:24.5px;background:#212121;border:1px solid #151515"></div>
<div class="frow" style="top:302.70px;height:17px"></div>
<div class="frow" style="top:321.36px;height:17px"></div>
<div class="frow" style="top:340.02px;height:17px"></div>
<div class="frow" style="top:358.68px;height:17px"></div>
<div class="frow" style="top:377.34px;height:17px"></div>
<div class="frow" style="top:396.00px;height:17px"></div>
<div class="frow" style="top:414.66px;height:17px"></div>
<div class="frow" style="top:433.32px;height:17px"></div>
<div class="frow" style="top:451.98px;height:17px"></div>
<div class="frow" style="top:470.64px;height:17px"></div>
<div class="frow" style="top:489.30px;height:17px"></div>
<div class="cb" style="top:306.40px"></div>
<div class="cb" style="top:325.06px"></div>
<div class="cb" style="top:343.72px"></div>
<div class="cb" style="top:362.38px"></div>
<div class="cb" style="top:381.04px;background:#f2c811;border-color:#e0b90f"></div>
<div class="cb" style="top:399.70px"></div>
<div class="cb" style="top:418.36px"></div>
<div class="cb" style="top:437.02px"></div>
<div class="cb" style="top:455.68px"></div>
<div class="cb" style="top:474.34px"></div>
<div class="cb" style="top:493.00px"></div>
<div style="left:1014.1px;top:188px;width:4.5px;height:130.3px;background:#767676;border-radius:2px"></div>
<div style="left:1018.7px;top:97px;width:1.3px;height:406px;background:#5eb1e2"></div>
<div class="hl" style="left:878.8px;top:371.8px;width:144px;height:27.6px"></div>
<svg style="left:877px;top:97px" width="143" height="406" viewBox="877 97 143 406">
<path d="M1002.3 113.5L1007.7 118.4L1002.3 123.3" fill="none" stroke="#b8b8c4" stroke-width="1.2"/>
<g fill="none" stroke="#b4b4b4" stroke-width="1.2"><circle cx="897.2" cy="152.4" r="4"/><path d="M894.3 155.4L889.4 160.4"/></g>
<path d="M885.6 183.1L889.4 186.5L885.6 189.9Z" fill="#9c9c9c"/>
<rect x="897.0" y="181.7" width="10.8" height="10" fill="#ececec"/>
<path d="M897.0 184.1H907.8M897.0 186.7H907.8M897.0 189.2H907.8M900.6 184.1V191.7M904.2 184.1V191.7" stroke="#5a5a5a" stroke-width="0.8" fill="none"/>
<path d="M885.6 203.5L889.4 206.9L885.6 210.3Z" fill="#9c9c9c"/>
<rect x="897.0" y="202.1" width="10.8" height="10" fill="#ececec"/>
<path d="M897.0 204.5H907.8M897.0 207.1H907.8M897.0 209.6H907.8M900.6 204.5V212.1M904.2 204.5V212.1" stroke="#5a5a5a" stroke-width="0.8" fill="none"/>
<path d="M885.6 224.0L889.4 227.4L885.6 230.8Z" fill="#9c9c9c"/>
<rect x="897.0" y="222.6" width="10.8" height="10" fill="#ececec"/>
<path d="M897.0 225.0H907.8M897.0 227.6H907.8M897.0 230.1H907.8M900.6 225.0V232.6M904.2 225.0V232.6" stroke="#5a5a5a" stroke-width="0.8" fill="none"/>
<path d="M885.6 244.5L889.4 247.9L885.6 251.3Z" fill="#9c9c9c"/>
<rect x="897.0" y="243.1" width="10.8" height="10" fill="#ececec"/>
<path d="M897.0 245.5H907.8M897.0 248.1H907.8M897.0 250.6H907.8M900.6 245.5V253.1M904.2 245.5V253.1" stroke="#5a5a5a" stroke-width="0.8" fill="none"/>
<path d="M885.6 264.9L889.4 268.3L885.6 271.7Z" fill="#9c9c9c"/>
<rect x="897.0" y="263.5" width="10.8" height="10" fill="#ececec"/>
<path d="M897.0 265.9H907.8M897.0 268.5H907.8M897.0 271.0H907.8M900.6 265.9V273.5M904.2 265.9V273.5" stroke="#5a5a5a" stroke-width="0.8" fill="none"/>
<path d="M889.8 286.6V291.4H885.4Z" fill="#9c9c9c"/>
<rect x="897.0" y="283.6" width="10.8" height="10" fill="#ececec"/>
<path d="M897.0 286.0H907.8M897.0 288.6H907.8M897.0 291.1H907.8M900.6 286.0V293.6M904.2 286.0V293.6" stroke="#5a5a5a" stroke-width="0.8" fill="none"/>
<path d="M926.6 325.8H919.8L923.6 330.1L919.8 334.4H926.6" fill="none" stroke="#a2a2a2" stroke-width="0.9"/>
<path d="M926.6 400.4H919.8L923.6 404.7L919.8 409.0H926.6" fill="none" stroke="#a2a2a2" stroke-width="0.9"/>
<path d="M926.6 475.0H919.8L923.6 479.3L919.8 483.6H926.6" fill="none" stroke="#a2a2a2" stroke-width="0.9"/>
<path d="M907 386.2L909.2 388.6L913.2 383.0" fill="none" stroke="#2a2a2a" stroke-width="1.3"/>
</svg>
<div id="txt">
<span class="t" style="left:13.00px;top:3.00px;font-size:9.60px;line-height:14px;color:#ffffff;letter-spacing:-0.490px;">File</span>
<span class="t" style="left:63.10px;top:3.00px;font-size:9.60px;line-height:14px;color:#333340;letter-spacing:-0.298px;">Home</span>
<span class="t" style="left:120.70px;top:3.00px;font-size:9.60px;line-height:14px;color:#333340;letter-spacing:0.225px;">View</span>
<span class="t" style="left:166.70px;top:3.00px;font-size:9.60px;line-height:14px;color:#333340;letter-spacing:0.438px;">Modeling</span>
<span class="t" style="left:241.20px;top:3.00px;font-size:9.60px;line-height:14px;color:#333340;letter-spacing:0.089px;">Help</span>
<span class="t" style="left:295.70px;top:3.00px;font-size:9.60px;line-height:14px;color:#333340;letter-spacing:-0.078px;">Format</span>
<span class="t" style="left:351.20px;top:3.00px;font-size:9.60px;line-height:14px;color:#333340;letter-spacing:0.093px;">Data / Drill</span>
<span class="t" style="left:939.50px;top:3.00px;font-size:10.20px;line-height:14px;color:#333340;letter-spacing:-0.226px;">Sign in</span>
<span class="t" style="left:7.50px;top:55.00px;font-size:9.50px;line-height:13px;color:#9a9a9a;letter-spacing:-0.574px;">Paste</span>
<span class="t" style="left:55.50px;top:26.00px;font-size:9.50px;line-height:13px;color:#333340;letter-spacing:0.102px;">Cut</span>
<span class="t" style="left:55.50px;top:45.00px;font-size:9.50px;line-height:13px;color:#333340;letter-spacing:-0.062px;">Copy</span>
<span class="t" style="left:55.50px;top:63.00px;font-size:9.50px;line-height:13px;color:#333340;letter-spacing:0.052px;">Format Painter</span>
<span class="t" style="left:40.70px;top:83.00px;font-size:9.50px;line-height:13px;color:#55555f;letter-spacing:0.229px;">Clipboard</span>
<span class="t" style="left:141.70px;top:55.00px;font-size:9.50px;line-height:13px;color:#333340;letter-spacing:-0.406px;">Get</span>
<span class="t" style="left:135.70px;top:66.00px;font-size:9.50px;line-height:13px;color:#333340;letter-spacing:-0.259px;">Data</span>
<span class="t" style="left:174.20px;top:55.00px;font-size:9.50px;line-height:13px;color:#333340;letter-spacing:-0.122px;">Recent</span>
<span class="t" style="left:169.50px;top:66.00px;font-size:9.50px;line-height:13px;color:#333340;letter-spacing:-0.310px;">Sources</span>
<span class="t" style="left:218.70px;top:55.00px;font-size:9.50px;line-height:13px;color:#333340;letter-spacing:-0.055px;">Enter</span>
<span class="t" style="left:220.00px;top:66.00px;font-size:9.50px;line-height:13px;color:#333340;letter-spacing:-0.193px;">Data</span>
<span class="t" style="left:268.00px;top:55.00px;font-size:9.50px;line-height:13px;color:#333340;letter-spacing:0.042px;">Edit</span>
<span class="t" style="left:257.00px;top:66.00px;font-size:9.50px;line-height:13px;color:#333340;letter-spacing:-0.128px;">Queries</span>
<span class="t" style="left:307.50px;top:55.00px;font-size:9.50px;line-height:13px;color:#333340;letter-spacing:-0.128px;">Refresh</span>
<span class="t" style="left:209.50px;top:83.00px;font-size:9.50px;line-height:13px;color:#55555f;letter-spacing:0.001px;">External data</span>
<span class="t" style="left:360.70px;top:55.00px;font-size:9.50px;line-height:13px;color:#333340;letter-spacing:-0.258px;">New</span>
<span class="t" style="left:356.20px;top:66.00px;font-size:9.50px;line-height:13px;color:#333340;letter-spacing:-0.296px;">Page</span>
<span class="t" style="left:395.70px;top:55.00px;font-size:9.50px;line-height:13px;color:#333340;letter-spacing:-0.258px;">New</span>
<span class="t" style="left:392.50px;top:66.00px;font-size:9.50px;line-height:13px;color:#333340;letter-spacing:-0.041px;">Visual</span>
<span class="t" style="left:425.70px;top:55.00px;font-size:9.50px;line-height:13px;color:#333340;letter-spacing:0.347px;">Buttons</span>
<span class="t" style="left:481.20px;top:26.00px;font-size:9.50px;line-height:13px;color:#333340;letter-spacing:-0.156px;">Text box</span>
<span class="t" style="left:481.20px;top:45.00px;font-size:9.50px;line-height:13px;color:#333340;letter-spacing:-0.152px;">Image</span>
<span class="t" style="left:481.20px;top:63.00px;font-size:9.50px;line-height:13px;color:#333340;letter-spacing:-0.087px;">Shapes</span>
<span class="t" style="left:425.70px;top:83.00px;font-size:9.50px;line-height:13px;color:#55555f;letter-spacing:0.007px;">Insert</span>
<span class="t" style="left:550.00px;top:55.00px;font-size:9.50px;line-height:13px;color:#333340;letter-spacing:-0.157px;">From</span>
<span class="t" style="left:535.00px;top:66.00px;font-size:9.50px;line-height:13px;color:#333340;letter-spacing:0.125px;">Marketplace</span>
<span class="t" style="left:596.70px;top:55.00px;font-size:9.50px;line-height:13px;color:#333340;letter-spacing:-0.224px;">From</span>
<span class="t" style="left:600.50px;top:66.00px;font-size:9.50px;line-height:13px;color:#333340;letter-spacing:-0.271px;">File</span>
<span class="t" style="left:548.00px;top:83.00px;font-size:9.50px;line-height:13px;color:#55555f;letter-spacing:-0.094px;">Custom visuals</span>
<span class="t" style="left:649.50px;top:55.00px;font-size:9.50px;line-height:13px;color:#333340;letter-spacing:0.131px;">Manage</span>
<span class="t" style="left:638.00px;top:66.00px;font-size:9.50px;line-height:13px;color:#333340;letter-spacing:0.096px;">Relationships</span>
<span class="t" style="left:638.00px;top:83.00px;font-size:9.50px;line-height:13px;color:#55555f;letter-spacing:0.096px;">Relationships</span>
<span class="t" style="left:728.00px;top:26.00px;font-size:9.50px;line-height:13px;color:#333340;letter-spacing:-0.041px;">New Measure</span>
<span class="t" style="left:728.00px;top:45.00px;font-size:9.50px;line-height:13px;color:#333340;letter-spacing:0.068px;">New Column</span>
<span class="t" style="left:728.00px;top:63.00px;font-size:9.50px;line-height:13px;color:#333340;letter-spacing:-0.021px;">New Quick Measure</span>
<span class="t" style="left:736.20px;top:83.00px;font-size:9.50px;line-height:13px;color:#55555f;letter-spacing:0.114px;">Calculations</span>
<span class="t" style="left:828.70px;top:55.00px;font-size:9.50px;line-height:13px;color:#333340;letter-spacing:0.021px;">Publish</span>
<span class="t" style="left:833.00px;top:83.00px;font-size:9.50px;line-height:13px;color:#55555f;letter-spacing:-0.340px;">Share</span>
<span class="t" style="left:40.80px;top:122.00px;font-size:5.80px;line-height:9px;color:#b2b2b2;letter-spacing:0.201px;-webkit-text-stroke:0;">SalesAmount by EnglishProductName</span>
<span class="t" style="left:41.60px;top:403.00px;font-size:5.60px;line-height:9px;color:#9a9a9a;letter-spacing:-0.037px;-webkit-text-stroke:0;">$0.0M</span>
<span class="t" style="left:41.60px;top:365.00px;font-size:5.60px;line-height:9px;color:#9a9a9a;letter-spacing:-0.037px;-webkit-text-stroke:0;">$0.2M</span>
<span class="t" style="left:41.60px;top:326.00px;font-size:5.60px;line-height:9px;color:#9a9a9a;letter-spacing:-0.037px;-webkit-text-stroke:0;">$0.4M</span>
<span class="t" style="left:41.60px;top:288.00px;font-size:5.60px;line-height:9px;color:#9a9a9a;letter-spacing:-0.037px;-webkit-text-stroke:0;">$0.6M</span>
<span class="t" style="left:41.60px;top:249.00px;font-size:5.60px;line-height:9px;color:#9a9a9a;letter-spacing:-0.037px;-webkit-text-stroke:0;">$0.8M</span>
<span class="t" style="left:41.60px;top:210.00px;font-size:5.60px;line-height:9px;color:#9a9a9a;letter-spacing:-0.037px;-webkit-text-stroke:0;">$1.0M</span>
<span class="t" style="left:41.60px;top:172.00px;font-size:5.60px;line-height:9px;color:#9a9a9a;letter-spacing:-0.037px;-webkit-text-stroke:0;">$1.2M</span>
<span class="t" style="left:41.60px;top:133.00px;font-size:5.60px;line-height:9px;color:#9a9a9a;letter-spacing:-0.037px;-webkit-text-stroke:0;">$1.4M</span>
<span class="t" style="left:167.20px;top:211.00px;font-size:14.40px;line-height:19px;color:#8a3943;font-weight:bold;transform-origin:0 50%;transform:scaleX(0.8856);-webkit-text-stroke:0.3px #8a3943;">©tutorialgateway.org</span>
<span class="t" style="left:727.00px;top:111.00px;font-size:12.00px;line-height:16px;color:#ffffff;transform-origin:0 50%;transform:scaleX(0.9419);-webkit-text-stroke:0.45px #fff;">VISUALIZATIONS</span>
<span class="t" style="left:726.50px;top:281.00px;font-size:10.00px;line-height:14px;color:#a0a0a0;letter-spacing:-0.135px;">Axis</span>
<span class="t" style="left:727.00px;top:305.00px;font-size:10.20px;line-height:14px;color:#ffffff;letter-spacing:-0.130px;">EnglishProductName</span>
<span class="t" style="left:726.50px;top:339.00px;font-size:10.00px;line-height:14px;color:#a0a0a0;letter-spacing:-0.075px;">Legend</span>
<span class="t" style="left:729.50px;top:363.00px;font-size:10.00px;line-height:14px;color:#ababab;letter-spacing:0.033px;">Drag data fields here</span>
<span class="t" style="left:726.50px;top:390.00px;font-size:10.00px;line-height:14px;color:#a0a0a0;letter-spacing:-0.086px;">Value</span>
<span class="t" style="left:727.00px;top:414.00px;font-size:10.20px;line-height:14px;color:#ffffff;letter-spacing:-0.159px;">SalesAmount</span>
<span class="t" style="left:726.50px;top:449.00px;font-size:10.00px;line-height:14px;color:#a0a0a0;letter-spacing:0.094px;">Color saturation</span>
<span class="t" style="left:729.50px;top:473.00px;font-size:10.00px;line-height:14px;color:#ababab;letter-spacing:0.033px;">Drag data fields here</span>
<span class="t" style="left:726.50px;top:499.00px;font-size:10.00px;line-height:14px;color:#a0a0a0;letter-spacing:0.371px;">Tooltips</span>
<span class="t" style="left:886.30px;top:111.00px;font-size:12.00px;line-height:16px;color:#ffffff;transform-origin:0 50%;transform:scaleX(0.9449);-webkit-text-stroke:0.45px #fff;">FIELDS</span>
<span class="t" style="left:909.80px;top:149.00px;font-size:10.00px;line-height:14px;color:#b0b0b0;letter-spacing:0.103px;">Search</span>
<span class="t" style="left:918.70px;top:181.00px;font-size:10.30px;line-height:14px;color:#ffffff;letter-spacing:-0.064px;">DimCustomer</span>
<span class="t" style="left:918.70px;top:202.00px;font-size:10.30px;line-height:14px;color:#ffffff;letter-spacing:-0.210px;">DimDate</span>
<span class="t" style="left:918.70px;top:222.00px;font-size:10.30px;line-height:14px;color:#ffffff;letter-spacing:-0.229px;">DimEmployee</span>
<span class="t" style="left:918.70px;top:243.00px;font-size:10.30px;line-height:14px;color:#ffffff;letter-spacing:-0.132px;">DimGeography</span>
<span class="t" style="left:918.70px;top:263.00px;font-size:10.30px;line-height:14px;color:#ffffff;letter-spacing:-0.028px;">DimOrganization</span>
<span class="t" style="left:918.70px;top:283.00px;font-size:10.30px;line-height:14px;color:#e0b400;">DimProduct</span>
<span class="t" style="left:932.80px;top:305.00px;font-size:10.30px;line-height:14px;color:#ffffff;letter-spacing:-0.102px;">Color</span>
<span class="t" style="left:932.80px;top:324.00px;font-size:10.30px;line-height:14px;color:#ffffff;letter-spacing:-0.360px;">DealerPrice</span>
<span class="t" style="left:932.80px;top:342.00px;font-size:10.30px;line-height:14px;color:#ffffff;letter-spacing:-0.396px;">EndDate</span>
<span class="t" style="left:932.80px;top:361.00px;font-size:10.30px;line-height:14px;color:#ffffff;letter-spacing:-0.433px;">EnglishDesc...</span>
<span class="t" style="left:932.80px;top:379.00px;font-size:10.30px;line-height:14px;color:#ffffff;letter-spacing:-0.301px;">EnglishProd...</span>
<span class="t" style="left:932.80px;top:398.00px;font-size:10.30px;line-height:14px;color:#ffffff;letter-spacing:-0.411px;">ListPrice</span>
<span class="t" style="left:932.80px;top:417.00px;font-size:10.30px;line-height:14px;color:#ffffff;letter-spacing:-0.226px;">ProductKey</span>
<span class="t" style="left:932.80px;top:435.00px;font-size:10.30px;line-height:14px;color:#ffffff;letter-spacing:-0.177px;">ProductLine</span>
<span class="t" style="left:932.80px;top:454.00px;font-size:10.30px;line-height:14px;color:#ffffff;letter-spacing:-0.266px;">ProductSub...</span>
<span class="t" style="left:932.80px;top:473.00px;font-size:10.30px;line-height:14px;color:#ffffff;letter-spacing:-0.252px;">StandardCost</span>
<span class="t" style="left:932.80px;top:491.00px;font-size:10.30px;line-height:14px;color:#ffffff;letter-spacing:-0.225px;">StartDate</span>
</div>
</body></html>
